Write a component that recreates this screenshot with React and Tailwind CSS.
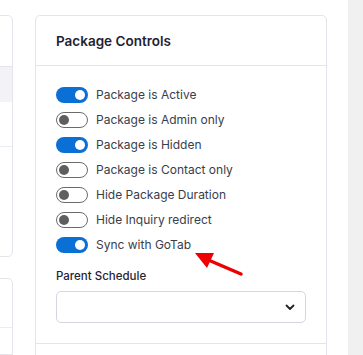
import React from "react";

const rows = [
  ["Package is Active", true],
  ["Package is Admin only", false],
  ["Package is Hidden", true],
  ["Package is Contact only", false],
  ["Hide Package Duration", false],
  ["Hide Inquiry redirect", false],
  ["Sync with GoTab", true],
];

function Toggle({ on }) {
  return on ? (
    <div className="w-[32px] h-[16px] rounded-full bg-[#0b70d6] flex items-center justify-end px-[3px] shrink-0">
      <div className="w-[10px] h-[10px] rounded-full bg-white" />
    </div>
  ) : (
    <div className="w-[32px] h-[16px] rounded-full bg-white border border-[#6b6b6b] flex items-center justify-start px-[2px] shrink-0">
      <div className="w-[10px] h-[10px] rounded-full bg-[#5f5f5f]" />
    </div>
  );
}

export default function App() {
  return (
    <div
      className="relative w-[363px] h-[355px] overflow-hidden bg-white flex"
      style={{ fontFamily: "Inter, 'Noto Sans', sans-serif" }}
    >
      {/* left column */}
      <div className="w-[13px] shrink-0 flex flex-col pt-[15px]">
        <div className="ml-[-20px] w-[33px] h-[253px] border border-[#e4e4ea] rounded-r-[5px] flex flex-col">
          <div className="h-[50px]" />
          <div className="h-[36px] bg-[#f3f3f7] border-t border-[#e4e4ea]" />
          <div className="h-[45px] border-b border-[#ececf0]" />
        </div>
        <div className="mt-[21px] ml-[-20px] w-[33px] h-[80px] border border-[#e4e4ea] rounded-tr-[5px] flex flex-col">
          <div className="h-[49px] border-b border-[#ececf0]" />
        </div>
      </div>

      {/* right card */}
      <div className="ml-[22px] w-[292px] shrink-0 pt-[15px]">
        <div className="h-[360px] border border-[#e4e4ea] rounded-t-[5px] flex flex-col">
          <div className="h-[50px] border-b border-[#e4e4ea] px-[20px] flex items-center pt-[2px]">
            <span className="text-[13.5px] font-semibold text-[#1f2333]">Package Controls</span>
          </div>
          <div className="px-[20px] pt-[16px] pb-[20px] border-b border-[#e4e4ea]">
            {rows.map(([label, on]) => (
              <div key={label} className="h-[25px] flex items-center gap-[8px]">
                <Toggle on={on} />
                <span className="text-[12px] text-[#3a3d4a]">{label}</span>
              </div>
            ))}
            <div className="mt-[11px] h-[18px] flex items-center text-[11.5px] font-medium text-[#1f2333]">
              Parent Schedule
            </div>
            <div className="mt-[5px] h-[32px] w-[250px] border border-[#d6d6e2] rounded-[5px] flex items-center justify-end pr-[10px]">
              <svg width="10" height="7" viewBox="0 0 10 7">
                <path d="M1.5 1.5 L5 5 L8.5 1.5" fill="none" stroke="#222" strokeWidth="1.8" strokeLinecap="round" strokeLinejoin="round" />
              </svg>
            </div>
          </div>
        </div>
      </div>

      {/* right gray strip */}
      <div className="ml-[21px] flex-1 bg-[#f0f0f1]" />

      {/* red arrow */}
      <svg className="absolute left-0 top-0 pointer-events-none" width="363" height="355">
        <line x1="241" y1="274" x2="206" y2="259" stroke="#ee0000" strokeWidth="3.5" strokeLinecap="round" />
        <polygon points="195,253 214,253 207,268" fill="#ee0000" />
      </svg>
    </div>
  );
}
